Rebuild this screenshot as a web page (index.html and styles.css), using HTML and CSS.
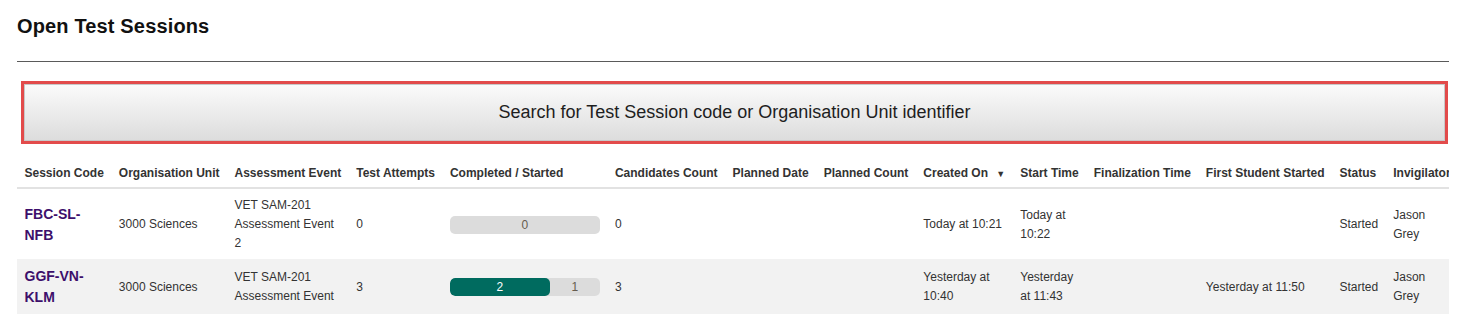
FILE: index.html
```html
<!DOCTYPE html>
<html lang="en">
<head>
  <meta charset="UTF-8">
  <title>Open Test Sessions</title>
  <link rel="stylesheet" href="styles.css">
</head>
<body>
  <div class="page">
    <h1>Open Test Sessions</h1>
    <hr class="rule">

    <!-- search trigger -->
    <button class="search-btn">Search for Test Session code or Organisation Unit identifier</button>

    <!-- sessions table -->
    <div class="table-wrap">
      <table class="sessions">
        <thead>
          <tr>
            <th>Session Code</th>
            <th>Organisation Unit</th>
            <th>Assessment Event</th>
            <th>Test Attempts</th>
            <th>Completed / Started</th>
            <th>Candidates Count</th>
            <th>Planned Date</th>
            <th>Planned Count</th>
            <th>Created On <span class="sort">&#9660;</span></th>
            <th>Start Time</th>
            <th>Finalization Time</th>
            <th>First Student Started</th>
            <th>Status</th>
            <th>Invigilator</th>
          </tr>
        </thead>
        <tbody>
          <tr>
            <td><a class="code" href="#">FBC-SL-NFB</a></td>
            <td>3000 Sciences</td>
            <td>VET SAM-201 Assessment Event 2</td>
            <td>0</td>
            <td>
              <div class="progress">
                <div class="part rest" style="width: 100%">0</div>
              </div>
            </td>
            <td>0</td>
            <td></td>
            <td></td>
            <td>Today at 10:21</td>
            <td>Today at 10:22</td>
            <td></td>
            <td></td>
            <td>Started</td>
            <td>Jason Grey</td>
          </tr>
          <tr class="alt">
            <td><a class="code" href="#">GGF-VN-KLM</a></td>
            <td>3000 Sciences</td>
            <td>VET SAM-201 Assessment Event</td>
            <td>3</td>
            <td>
              <div class="progress">
                <div class="part done" style="width: 66.667%">2</div>
                <div class="part rest" style="width: 33.333%">1</div>
              </div>
            </td>
            <td>3</td>
            <td></td>
            <td></td>
            <td>Yesterday at 10:40</td>
            <td>Yesterday at 11:43</td>
            <td></td>
            <td>Yesterday at 11:50</td>
            <td>Started</td>
            <td>Jason Grey</td>
          </tr>
        </tbody>
      </table>
    </div>
  </div>
</body>
</html>
```

FILE: styles.css
```css
body {
  margin: 0;
  font-family: "Liberation Sans", Arial, sans-serif;
  color: #333;
  background-color: #fff;
}
.page {
  padding: 15px 16px 0 17px;
}
h1 {
  margin: 0 0 24px;
  font-size: 20px;
  line-height: 22px;
  font-weight: bold;
  letter-spacing: 0.15px;
  color: #111;
}
.rule {
  margin: 0;
  border: none;
  border-top: 1px solid #5a5a5a;
}
.search-btn {
  display: block;
  width: calc(100% - 5px);
  height: 63px;
  margin: 19px 0 13px 4px;
  padding: 0;
  font-family: "Liberation Sans", Arial, sans-serif;
  font-size: 18px;
  color: #1e1e1e;
  background: linear-gradient(to bottom, #fbfbfb, #dcdcdc);
  border: 3px solid #e24b4b;
  box-shadow: inset 0 0 0 1px #c8c8c8;
  cursor: pointer;
}
.table-wrap {
  overflow-x: hidden;
}
.sessions {
  width: min-content;
  border-collapse: collapse;
  font-size: 12px;
}
.sessions th {
  padding: 8px 7.5px 5px;
  line-height: 17px;
  text-align: left;
  white-space: nowrap;
  font-weight: bold;
  color: #333;
  border-bottom: 2px solid #e2e2e2;
}
.sessions th .sort {
  font-size: 9px;
  line-height: 1;
  margin-left: 5px;
}
.sessions td {
  padding: 7px 7.5px 6px;
  line-height: 19px;
  vertical-align: middle;
  color: #333;
}
.sessions tr.alt td {
  background-color: #f2f2f2;
}
.code {
  font-size: 14px;
  line-height: 20px;
  font-weight: bold;
  color: #3d0f6b;
  text-decoration: none;
}
.progress {
  display: flex;
  width: 150px;
  height: 18px;
  border-radius: 5px;
  overflow: hidden;
  background-color: #dcdcdc;
}
.part {
  text-align: center;
  font-size: 12px;
  line-height: 18px;
}
.part.done {
  background-color: #006b5f;
  color: #fff;
  border-radius: 5px;
}
.part.rest {
  color: #665c4e;
}
```
